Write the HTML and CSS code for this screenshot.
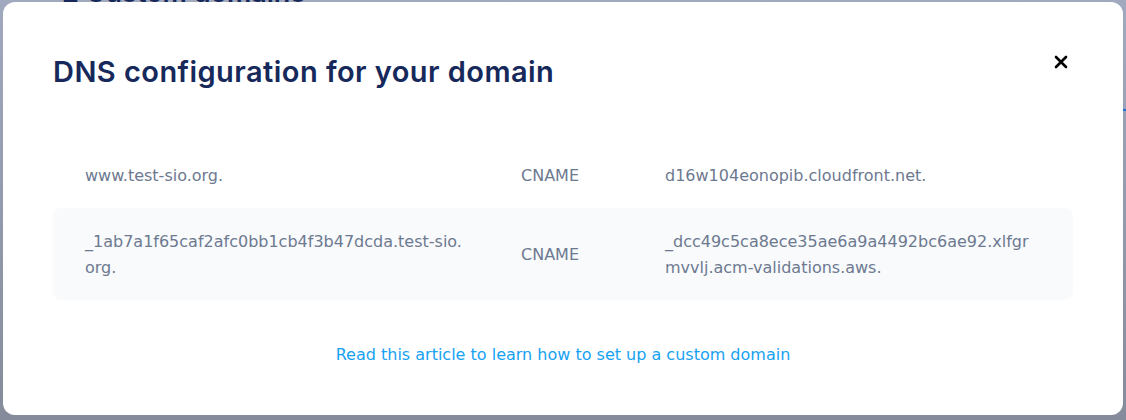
FILE: index.html
```html
<!DOCTYPE html>
<html lang="en">
<head>
<meta charset="utf-8">
<title>DNS configuration</title>
<link rel="stylesheet" href="styles.css">
</head>
<body>
<div class="page">
  <h2 class="page-title">2 Custom domains</h2>
  <div class="page-rule"></div>
</div>
<div class="overlay">
  <div class="modal" role="dialog" aria-labelledby="dns-title">
    <div class="modal-header">
      <h1 class="modal-title" id="dns-title">DNS configuration for your domain</h1>
      <button class="close" aria-label="Close">
        <svg width="24" height="24" viewBox="0 0 24 24" aria-hidden="true">
          <path d="M7 7 L17 17 M17 7 L7 17" stroke="#000" stroke-width="2.6" stroke-linecap="round" fill="none"/>
        </svg>
      </button>
    </div>
    <div class="records">
      <div class="record">
        <div class="cell name">www.test-sio.org.</div>
        <div class="cell type">CNAME</div>
        <div class="cell value">d16w104eonopib.cloudfront.net.</div>
      </div>
      <div class="record alt">
        <div class="cell name">_1ab7a1f65caf2afc0bb1cb4f3b47dcda.test-sio.org.</div>
        <div class="cell type">CNAME</div>
        <div class="cell value">_dcc49c5ca8ece35ae6a9a4492bc6ae92.xlfgrmvvlj.acm-validations.aws.</div>
      </div>
    </div>
    <div class="help">
      <a class="help-link" href="#">Read this article to learn how to set up a custom domain</a>
    </div>
  </div>
</div>
</body>
</html>
```
FILE: styles.css
```css
* { box-sizing: border-box; }
html, body { margin: 0; padding: 0; }
body {
  width: 1126px;
  height: 420px;
  overflow: hidden;
  background: linear-gradient(#a1a9bf, #868b9b);
  font-family: "DejaVu Sans", "Noto Sans", sans-serif;
}
.page {
  height: 420px;
  padding: 0 0 0 62px;
}
.page-title {
  margin: -25px 0 0;
  font-family: "Inter", sans-serif;
  font-size: 27px;
  line-height: 36px;
  font-weight: 600;
  color: #16295a;
}
.page-rule {
  margin: 98px 0 0 auto;
  width: 4px;
  height: 2px;
  background: #1a73d9;
}
.overlay {
  position: fixed;
  inset: 0;
  padding: 2px 3px 5px 3px;
}
.modal {
  background: #fff;
  border-radius: 12px;
  padding: 52px 50px 47px 50px;
  height: 413px;
}
.modal-header {
  display: flex;
  justify-content: space-between;
  align-items: flex-start;
}
.modal-title {
  margin: 0;
  font-family: "Inter", sans-serif;
  font-size: 29px;
  line-height: 36px;
  font-weight: 600;
  letter-spacing: 0.45px;
  color: #16295a;
}
.close {
  margin-top: -4px;
  width: 24px;
  height: 24px;
  padding: 0;
  border: 0;
  background: none;
  display: flex;
}
.records {
  margin-top: 52px;
}
.record {
  display: grid;
  grid-template-columns: 436px 144px 1fr;
  align-items: center;
  padding: 21px 32px 19px;
  border-radius: 8px;
  font-size: 16px;
  line-height: 26px;
  color: #6d7990;
}
.record.alt { background: #f8fafc; }
.cell { word-break: break-all; }
.name { padding-right: 54px; }
.help {
  margin-top: 42px;
  text-align: center;
  font-size: 16px;
  line-height: 26px;
}
.help-link {
  color: #16a2f2;
  text-decoration: none;
}
```
